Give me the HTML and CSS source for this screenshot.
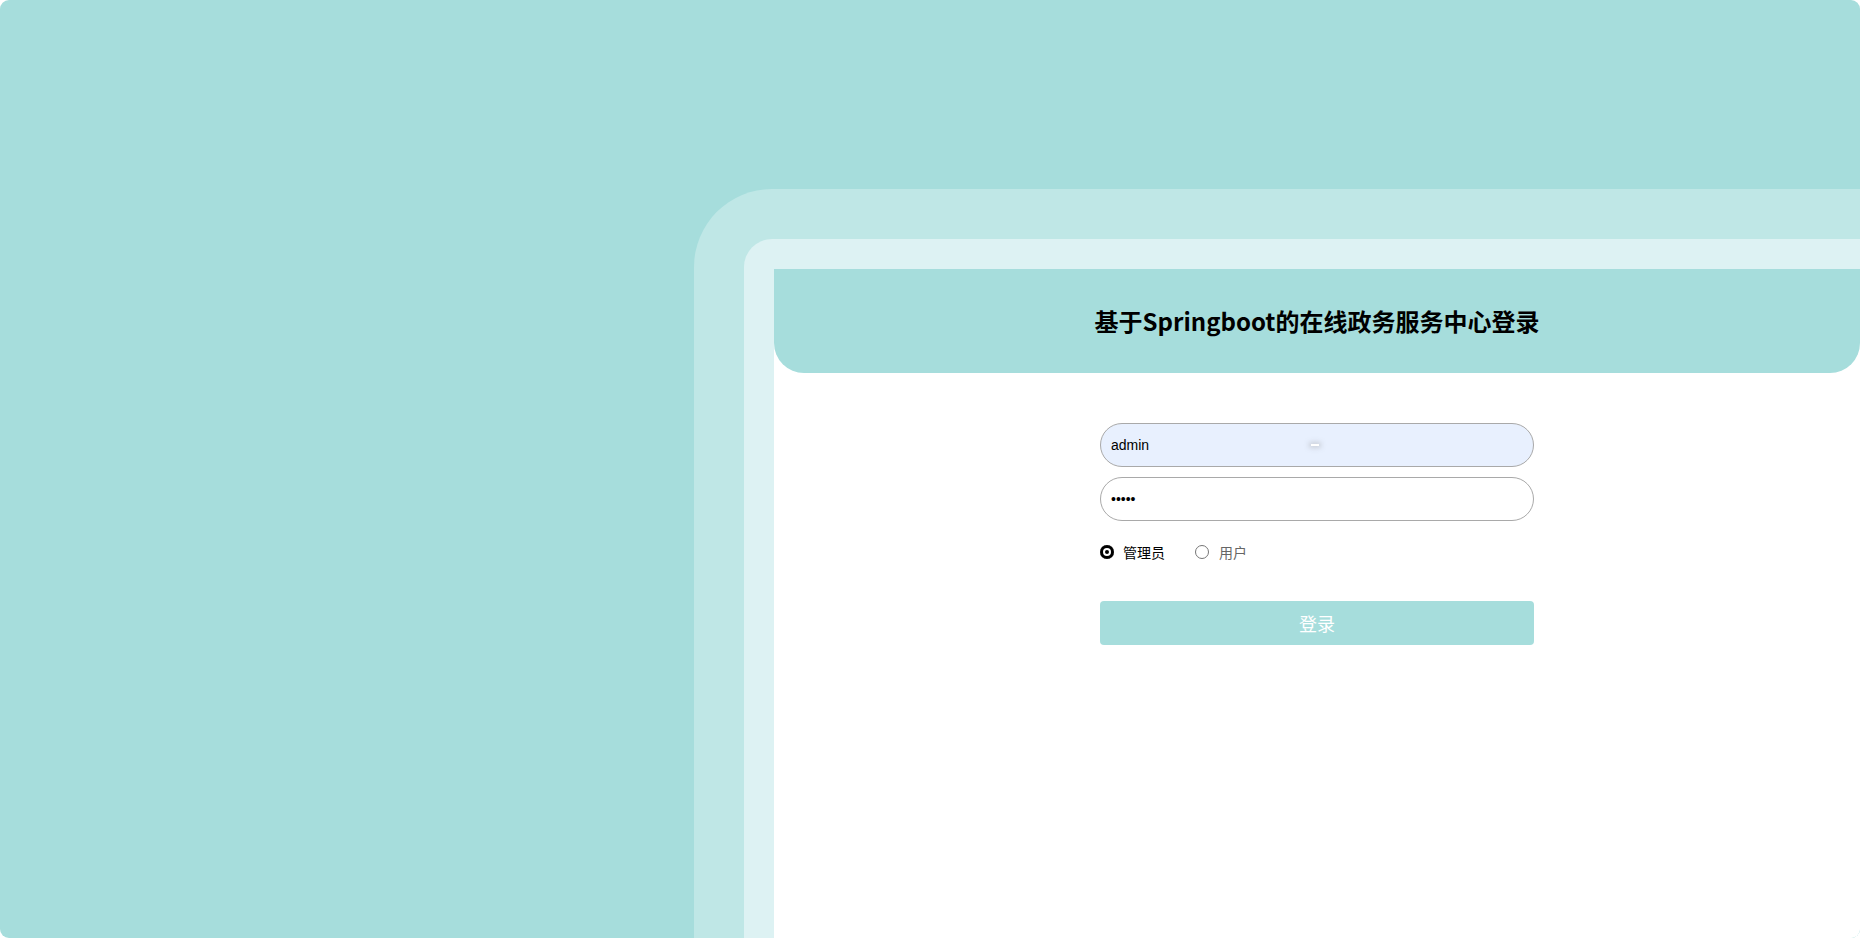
FILE: index.html
```html
<!DOCTYPE html>
<html lang="zh">
<head>
<meta charset="utf-8">
<title>登录</title>
<link rel="stylesheet" href="styles.css">
</head>
<body>
<div class="page">
  <div class="layer1">
    <div class="layer2">
      <div class="panel">
        <div class="header">
          <h1 class="title">基于Springboot的在线政务服务中心登录</h1>
        </div>
        <form class="form">
          <div class="field">
            <input class="input autofill" type="text" value="admin">
            <span class="cursor-mark"></span>
          </div>
          <input class="input" type="password" value="admin">
          <div class="roles">
            <label class="role"><span class="radio on"></span><span class="role-text active">管理员</span></label>
            <label class="role"><span class="radio"></span><span class="role-text">用户</span></label>
          </div>
          <button class="submit" type="button">登录</button>
        </form>
      </div>
    </div>
  </div>
</div>
</body>
</html>
```
FILE: styles.css
```css
* { box-sizing: border-box; }
html, body {
  margin: 0;
  padding: 0;
  background: #ffffff;
}
body {
  width: 1860px;
  height: 938px;
  overflow: hidden;
  font-family: "Noto Sans CJK SC", "Liberation Sans", sans-serif;
}
.page {
  width: 1860px;
  height: 938px;
  background: #a6dddc;
  border-radius: 9px;
  overflow: hidden;
  display: flex;
  padding: 189px 0 0 694px;
}
.layer1 {
  flex: 1;
  background: #bfe7e6;
  border-top-left-radius: 78px;
  padding: 50px 0 0 50px;
  display: flex;
}
.layer2 {
  flex: 1;
  background: #ddf2f3;
  border-top-left-radius: 28px;
  padding: 30px 0 0 30px;
  display: flex;
}
.panel {
  flex: 1;
  background: #ffffff;
  display: flex;
  flex-direction: column;
  border-bottom-right-radius: 8px;
}
.header {
  height: 104px;
  background: #a6dddc;
  border-radius: 0 0 30px 30px;
  display: flex;
  align-items: center;
  justify-content: center;
}
.title {
  margin: 0;
  font-size: 24px;
  font-weight: 700;
  color: #000;
  line-height: 1;
}
.form {
  width: 434px;
  margin: 50px auto 0;
  display: flex;
  flex-direction: column;
  gap: 10px;
}
.field {
  position: relative;
}
.input {
  display: block;
  width: 434px;
  height: 44px;
  border: 1px solid #a9a9a9;
  border-radius: 22px;
  padding: 0 10px;
  font-family: "Liberation Sans", Arial, sans-serif;
  font-size: 14px;
  color: #000;
  background: #ffffff;
  outline: none;
}
.input.autofill {
  background: #e8f0fe;
}
.cursor-mark {
  position: absolute;
  left: 211px;
  top: 21px;
  width: 8px;
  height: 2px;
  background: #ffffff;
  box-shadow: 0 0 5px 2px rgba(150, 150, 150, 0.35);
}
.roles {
  display: flex;
  align-items: center;
  height: 14px;
  margin-top: 14px;
  gap: 30px;
}
.role {
  display: flex;
  align-items: center;
  gap: 9px;
}
.role + .role {
  gap: 10px;
}
.radio {
  width: 14px;
  height: 14px;
  border-radius: 50%;
  border: 1px solid #767676;
  background: #fff;
  flex: none;
}
.radio.on {
  border: none;
  background: #000;
  box-shadow: inset 0 0 0 3px #000, inset 0 0 0 5px #fff;
}
.role-text {
  font-size: 14px;
  line-height: 14px;
  color: #666;
}
.role-text.active {
  color: #000;
}
.submit {
  margin-top: 32px;
  height: 44px;
  width: 434px;
  border: none;
  border-radius: 4px;
  background: #a6dddc;
  color: #ffffff;
  font-family: "Noto Sans CJK SC", sans-serif;
  font-size: 18px;
  cursor: pointer;
}
```
